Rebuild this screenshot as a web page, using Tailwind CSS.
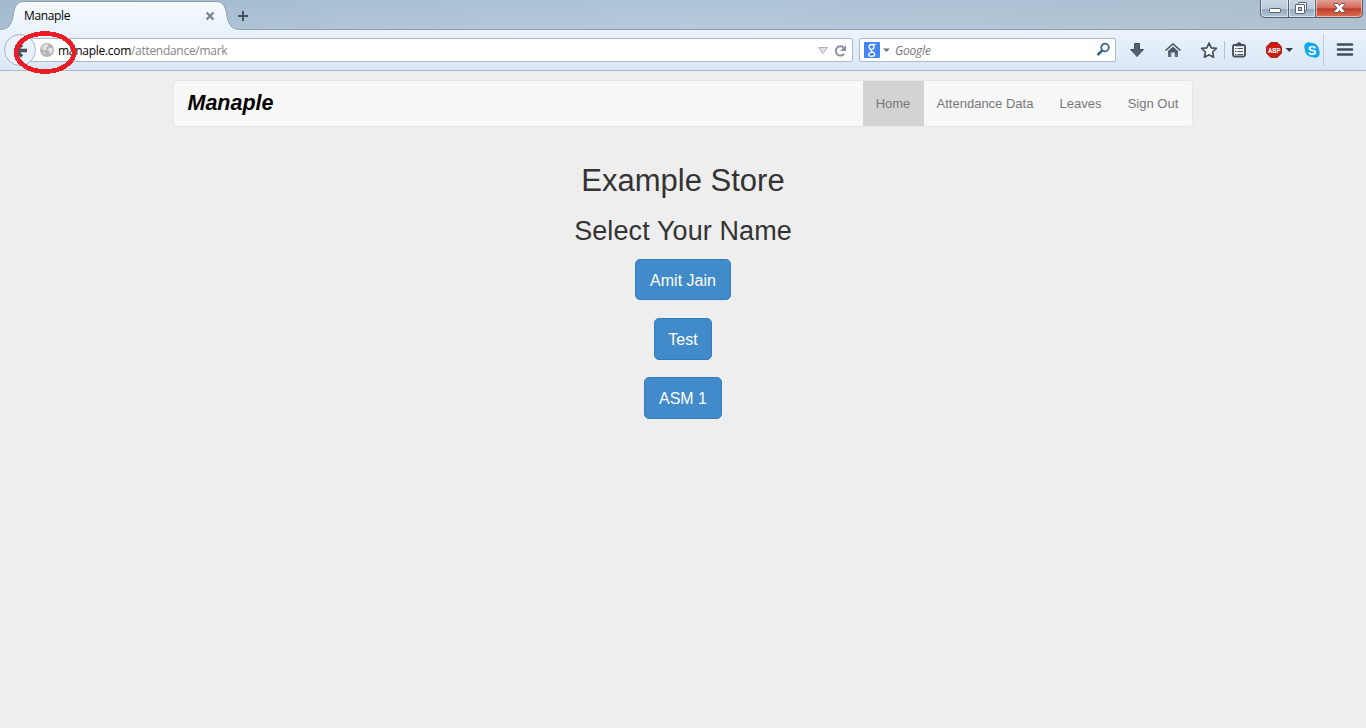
<!DOCTYPE html>
<html lang="en">
<head>
<meta charset="utf-8">
<title>Manaple</title>
<script src="https://cdn.jsdelivr.net/npm/@tailwindcss/browser@4"></script>
</head>
<body class="w-[1366px] h-[728px] overflow-hidden bg-[#eeeeee] font-['Liberation_Sans',sans-serif]">
<div class="relative flex h-full flex-col">

  <!-- Browser title bar -->
  <header class="relative flex h-[30px] shrink-0 justify-between bg-linear-to-b from-[#a7bdd2] to-[#bccddb] font-['Open_Sans',sans-serif] text-[12px]">
    <div class="absolute inset-0 bg-linear-to-r from-[#9fb6cc]/60 via-[#b3c9dd]/50 to-[#aabccb]/60"></div>
    <div class="relative h-[30px] w-[260px]">
      <svg class="absolute left-0 top-0" width="260" height="30" viewBox="0 0 260 30">
        <defs><linearGradient id="tab" x1="0" y1="0" x2="0" y2="1"><stop offset="0" stop-color="#f7fafe"/><stop offset="1" stop-color="#e9f2fb"/></linearGradient></defs>
        <path d="M0 29.500C9 29 11 25 13 16C14.500 6 17 1.500 24 1.500H216C223 1.500 225.500 6 227 16C229 25 231 29 240 29.500V31H0Z" fill="url(#tab)"/>
        <path d="M0 29.500C9 29 11 25 13 16C14.500 6 17 1.500 24 1.500H216C223 1.500 225.500 6 227 16C229 25 231 29 240 29.500" fill="none" stroke="#8a9fb4"/>
        <path d="M206.500 12.500l7 7m0-7l-7 7" stroke="#75818e" stroke-width="2.200"/>
        <path d="M238 16h10M243 11v10" stroke="#45525f" stroke-width="2"/>
      </svg>
      <div class="relative flex h-full items-center pl-6 pt-[2px] tracking-[-0.35px] text-black">Manaple</div>
    </div>
    <!-- Window controls -->
    <svg class="relative" width="106" height="18" viewBox="0 0 106 18">
      <defs>
        <linearGradient id="wb" x1="0" y1="0" x2="0" y2="1"><stop offset="0" stop-color="#c9d6e3"/><stop offset=".5" stop-color="#bccbd9"/><stop offset=".52" stop-color="#96abc0"/><stop offset="1" stop-color="#b4c6d6"/></linearGradient>
        <linearGradient id="wr" x1="0" y1="0" x2="0" y2="1"><stop offset="0" stop-color="#e2a095"/><stop offset=".45" stop-color="#d4695a"/><stop offset=".5" stop-color="#c03c26"/><stop offset="1" stop-color="#dd7456"/></linearGradient>
      </defs>
      <path d="M.5 0V13Q.5 17.500 5 17.500H55.500V0Z" fill="url(#wb)"/>
      <path d="M55.500 0V17.500H98Q102.500 17.500 102.500 13V0Z" fill="url(#wr)"/>
      <path d="M1.500 0V13Q1.500 16.500 5 16.500H27.500V0M29.500 0V16.500H54.500V0M56.500 0V16.500H98Q101.500 16.500 101.500 13V0" fill="none" stroke="#fff" stroke-opacity=".5"/>
      <path d="M.5 0V13Q.5 17.500 5 17.500H98Q102.500 17.500 102.500 13V0M28.500 0V17M55.500 0V17" fill="none" stroke="#526174"/>
      <rect x="9.500" y="8.500" width="11" height="4" rx=".7" fill="#fff" stroke="#596372"/>
      <rect x="38.500" y="2.500" width="8" height="8" rx=".5" fill="#fff" stroke="#596372"/>
      <rect x="35.500" y="4.500" width="9" height="9" rx=".5" fill="#fff" stroke="#596372"/>
      <rect x="38.500" y="7.500" width="3" height="3" fill="#b5c4d3" stroke="#596372"/>
      <path d="M74 3.500h3.700l1.800 2 1.800-2h3.700v1l-3 3.500 3 3.500v1h-3.700l-1.800-2-1.800 2H74v-1l3-3.500-3-3.500z" fill="#fff" stroke="#64545e"/>
    </svg>
  </header>

  <!-- Navigation toolbar -->
  <div class="relative flex h-[41px] shrink-0 items-center border-b border-[#a9bcd3] bg-linear-to-b from-[#ebf3fb] to-[#d9e7f6] font-['Open_Sans',sans-serif] text-[12px]">
    <div class="absolute left-[240px] right-0 top-[-1px] h-px bg-[#899eb3]"></div>
    <div class="ml-[20px] mt-[-1px] flex h-[24px] w-[833px] items-center rounded-[2px] border border-[#aabbcf] bg-white pl-[37px]">
      <span class="pt-[2px] tracking-[-0.29px] text-[#858585]"><span class="text-black">manaple.com</span>/attendance/mark</span>
      <svg class="ml-auto mr-[5px] mt-[2px]" width="32" height="18" viewBox="0 0 32 18">
        <path d="M3.500 5.500h9l-4.500 6z" fill="#dce2e8" stroke="#abb5c0"/>
        <path d="M28.500 5.500A4.600 4.600 0 1 0 29 11.800" fill="none" stroke="#87939f" stroke-width="2"/>
        <path d="M31 3v6h-6z" fill="#87939f"/>
      </svg>
    </div>
    <div class="ml-[6px] mt-[-1px] flex h-[24px] w-[257px] items-center rounded-[2px] border border-[#aabbcf] bg-white pl-[4px]">
      <svg width="16" height="16" viewBox="0 0 16 16">
        <rect width="16" height="16" rx="1" fill="#4285f4"/>
        <path d="M11.500 2.500H7.800C6 2.500 5 3.600 5 5s1 2.400 2.500 2.400S10 6.400 10 5 9 2.500 7.800 2.500M7.600 7.500c-1 .8-.8 1.500.4 2.200 1.600.8 2.800 1.400 2.800 2.600 0 1.300-1.200 2-3.100 2s-3-.8-3-1.900c0-1.300 1.400-2.100 3.700-2.100" fill="none" stroke="#fff" stroke-width="1.300"/>
      </svg>
      <svg class="ml-[3px] mt-[2px]" width="7" height="5" viewBox="0 0 7 5"><path d="M0 .5h7L3.500 4z" fill="#6b7279"/></svg>
      <span class="ml-[5px] pt-[2px] italic tracking-[-0.2px] text-[#777]">Google</span>
      <svg class="ml-auto mr-[4px]" width="15" height="15" viewBox="0 0 15 15"><circle cx="9" cy="5.500" r="3.800" fill="none" stroke="#36608f" stroke-width="1.800"/><path d="M6.300 8.400L1.500 13" stroke="#36608f" stroke-width="2.600"/></svg>
    </div>
    <svg class="mt-[-1px]" width="250" height="40" viewBox="1116 30 250 40">
      <defs><linearGradient id="ic" x1="0" y1="0" x2="0" y2="1"><stop offset="0" stop-color="#3d4852"/><stop offset="1" stop-color="#67737e"/></linearGradient></defs>
      <path d="M1134.500 43.500h5v6h4L1137 56.500l-6.500-7h4z" fill="#56616b" stroke="#424d57"/>
      <path d="M1165.500 50.500l7.500-6.500 7.500 6.500" fill="none" stroke="#46515b" stroke-width="1.600"/>
      <path d="M1168 51l5-4.300 5 4.300V57h-3.300v-4.500h-3.400V57H1168z" fill="url(#ic)"/>
      <path d="M1209 43l2.200 4.800 5.200.6-3.800 3.600 1 5.200-4.600-2.500-4.600 2.500 1-5.200-3.800-3.600 5.200-.6z" fill="#f5f9fd" stroke="#46515b" stroke-width="1.700" stroke-linejoin="round"/>
      <path d="M1224.500 41v18" stroke="#b2c2d3"/>
      <rect x="1233" y="45" width="12" height="11.500" rx="1.500" fill="#f5f9fd" stroke="#46515b" stroke-width="1.900"/>
      <path d="M1235 46.200v-1.700L1239 42l4 2.500v1.700z" fill="#46515b"/>
      <path d="M1235 48.500h1.500m1 0h5.500M1235 51.500h1.500m1 0h5.500M1235 54.500h1.500m1 0h5.500" stroke="#46515b"/>
      <path d="M1270.800 42.500h6.400l4.300 4.300v6.400l-4.300 4.300h-6.400l-4.300-4.300v-6.400z" fill="#ca1f12" stroke="#a5231a"/>
      <text x="1268" y="53" font-family="Liberation Sans" font-size="8" font-weight="bold" fill="#fff" textLength="12.500" lengthAdjust="spacingAndGlyphs">ABP</text>
      <path d="M1285.500 48h7.500l-3.700 4z" fill="#333f49"/>
      <circle cx="1309" cy="47" r="4.800" fill="#11a7ed"/><circle cx="1315" cy="53" r="4.800" fill="#11a7ed"/><circle cx="1312" cy="50" r="7" fill="#11a7ed"/>
      <text x="1307.700" y="54.600" font-family="Liberation Sans" font-size="13" font-weight="bold" fill="#fff">S</text>
      <path d="M1323.500 34v32" stroke="#bdcbda"/>
      <path d="M1338 44.500h14M1338 49.500h14M1338 54.500h14" stroke="#424d57" stroke-width="2.600" stroke-linecap="round"/>
    </svg>
  </div>

  <!-- Back button, site globe and the highlight ring around them -->
  <svg class="absolute left-0 top-[28px]" width="84" height="50" viewBox="0 28 84 50">
    <circle cx="20" cy="50" r="15.500" fill="#e9f2fb" stroke="#a4b7ca"/>
    <path d="M27 50.500H17M22 44.500l-6 6 6 6" fill="none" stroke="#46525e" stroke-width="3.400"/>
    <circle cx="47" cy="50" r="7" fill="#b4b4b4"/>
    <path d="M41.500 48l3-3.500 3-.5 1 1.500-2.500 2.500 1 1.500-3 1zM50 47.500l2.500 1 .5 1.500-2 4-1.500-.5v-2l-2.500-1.500zM43 52l2.500 1-.5 2z" fill="#e4e4e4"/>
    <ellipse cx="45" cy="52.500" rx="29" ry="19" fill="none" stroke="#ed1c24" stroke-width="4.600" shape-rendering="crispEdges"/>
  </svg>

  <!-- Page -->
  <main class="flex flex-1 flex-col items-center text-[#333333]">
    <nav class="mr-px mt-[9px] flex h-[47px] w-[1020px] items-stretch rounded-[4px] border border-[#e6e6e6] bg-[#f8f8f8] text-[13px] text-[#777777]">
      <a class="flex items-center pl-[14px] pb-px text-[21.5px] font-bold italic text-black">Manaple</a>
      <div class="ml-auto flex leading-none">
        <a class="flex w-[61px] items-center justify-center bg-[#d3d3d3]">Home</a>
        <a class="flex w-[123px] items-center justify-center">Attendance Data</a>
        <a class="flex w-[68px] items-center justify-center">Leaves</a>
        <a class="flex w-[77px] items-center justify-center">Sign Out</a>
      </div>
    </nav>
    <h1 class="mt-[36px] text-[31px] leading-[36px]">Example Store</h1>
    <h2 class="mt-[16px] text-[27px] leading-[32px] tracking-[0.1px]">Select Your Name</h2>
    <div class="mt-[12px] flex flex-col items-center gap-[17.500px] text-[16px] text-white">
      <button class="h-[41px] w-[96px] rounded-[5px] border border-[#357ebd] bg-[#428bca] pt-[2px]">Amit Jain</button>
      <button class="h-[42px] w-[58px] rounded-[5px] border border-[#357ebd] bg-[#428bca] pt-[2px]">Test</button>
      <button class="h-[42px] w-[78px] rounded-[5px] border border-[#357ebd] bg-[#428bca] pt-[2px]">ASM 1</button>
    </div>
  </main>
</div>
</body>
</html>
